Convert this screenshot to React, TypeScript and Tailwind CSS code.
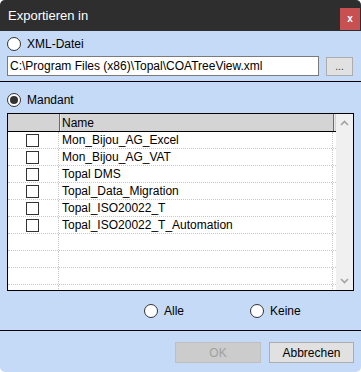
import React from 'react';

const font = { fontFamily: '"Liberation Sans", Arial, sans-serif' };

const items = [
  'Mon_Bijou_AG_Excel',
  'Mon_Bijou_AG_VAT',
  'Topal DMS',
  'Topal_Data_Migration',
  'Topal_ISO20022_T',
  'Topal_ISO20022_T_Automation',
];

const Radio: React.FC<{ checked?: boolean; label: string }> = ({ checked = false, label }) => (
  <div className="flex items-center gap-[6px] h-[14px]">
    <span className="w-[14px] h-[14px] rounded-full border border-[#333] bg-white flex items-center justify-center shrink-0">
      {checked && <span className="w-[8px] h-[8px] rounded-full bg-[#333]" />}
    </span>
    <span className="text-[12px] text-black leading-none">{label}</span>
  </div>
);

const Row: React.FC<{ name?: string }> = ({ name }) => (
  <div className="flex h-[17px] border-b border-dotted border-[#c8c8c8] shrink-0">
    <div className="w-[51px] border-r border-dotted border-[#c8c8c8] flex items-center pl-[18px]">
      {name && <span className="w-[13px] h-[13px] border border-[#333] bg-white" />}
    </div>
    <div className="w-[274px] border-r border-dotted border-[#c8c8c8] pl-[3px] flex items-center text-[12px] text-black leading-none">
      {name}
    </div>
  </div>
);

export default function App() {
  return (
    <div style={font} className="w-[361px] h-[372px] bg-[#c5daf6] rounded-[5px] overflow-hidden flex flex-col">
      {/* Titelleiste */}
      <div className="h-[31px] bg-[#2e2e2e] flex items-start shrink-0">
        <span className="text-white text-[13px] pl-[8px] pt-[9px] leading-none">Exportieren in</span>
        <div className="ml-auto mr-[1px] mt-[8px] w-[20px] h-[22px] bg-[#c75050] flex items-center justify-center text-white text-[10px] font-bold leading-none">
          x
        </div>
      </div>

      {/* XML-Datei */}
      <div className="px-[7px] pt-[6px]">
        <Radio label="XML-Datei" />
        <div className="flex items-center mt-[5px] h-[20px]">
          <div className="w-[312px] h-[20px] bg-white border border-[#7a7a7a] flex items-center pl-[2px] text-[12px] text-black leading-none">
            C:\Program Files (x86)\Topal\COATreeView.xml
          </div>
          <div className="ml-[7px] w-[27px] h-[19px] bg-[#e1e1e1] border border-[#adadad] flex items-end justify-center pb-[3px] text-[10px] text-[#333] leading-none">
            ...
          </div>
        </div>
      </div>
      <div className="mt-[5px] h-px bg-black" />

      {/* Mandant */}
      <div className="px-[7px] pt-[11px]">
        <Radio checked label="Mandant" />
        <div className="mt-[6px] w-[347px] h-[178px] border border-black bg-white flex overflow-hidden">
          <div className="w-[328px] flex flex-col">
            <div className="flex h-[18px] shrink-0 border-b border-black">
              <div className="w-[51px] bg-[#d4d4d4]" />
              <div className="w-px bg-[#6b6b6b]" />
              <div className="w-px bg-[#e8e8e8]" />
              <div className="w-[272px] bg-[#d4d4d4] pl-[1px] flex items-center text-[12px] text-black leading-none">
                Name
              </div>
              <div className="w-px bg-[#6b6b6b]" />
              <div className="w-px bg-[#e8e8e8]" />
              <div className="w-[1px] bg-[#d4d4d4]" />
            </div>
            {Array.from({ length: 10 }).map((_, i) => (
              <Row key={i} name={items[i]} />
            ))}
          </div>
          <div className="flex-1 bg-[#f0f0f0] flex flex-col items-center justify-between py-[6px]">
            <svg width="9" height="6" viewBox="0 0 9 6">
              <path d="M1 5 L4.5 1.5 L8 5" fill="none" stroke="#a3a3a3" strokeWidth="1.6" />
            </svg>
            <svg width="9" height="6" viewBox="0 0 9 6">
              <path d="M1 1 L4.5 4.5 L8 1" fill="none" stroke="#a3a3a3" strokeWidth="1.6" />
            </svg>
          </div>
        </div>
        <div className="flex mt-[13px] h-[14px]">
          <div className="ml-[137px] w-[106px]">
            <Radio label="Alle" />
          </div>
          <div>
            <Radio label="Keine" />
          </div>
        </div>
      </div>
      <div className="mt-[12px] h-px bg-black" />

      {/* Buttons */}
      <div className="flex justify-end gap-[8px] pr-[7px] mt-[11px]">
        <div className="w-[86px] h-[21px] bg-[#cccccc] border border-[#bfbfbf] flex items-center justify-center text-[12px] text-[#a0a0a0] leading-none">
          OK
        </div>
        <div className="w-[85px] h-[21px] bg-[#e1e1e1] border border-[#adadad] flex items-center justify-center text-[12px] text-black leading-none">
          Abbrechen
        </div>
      </div>
    </div>
  );
}
